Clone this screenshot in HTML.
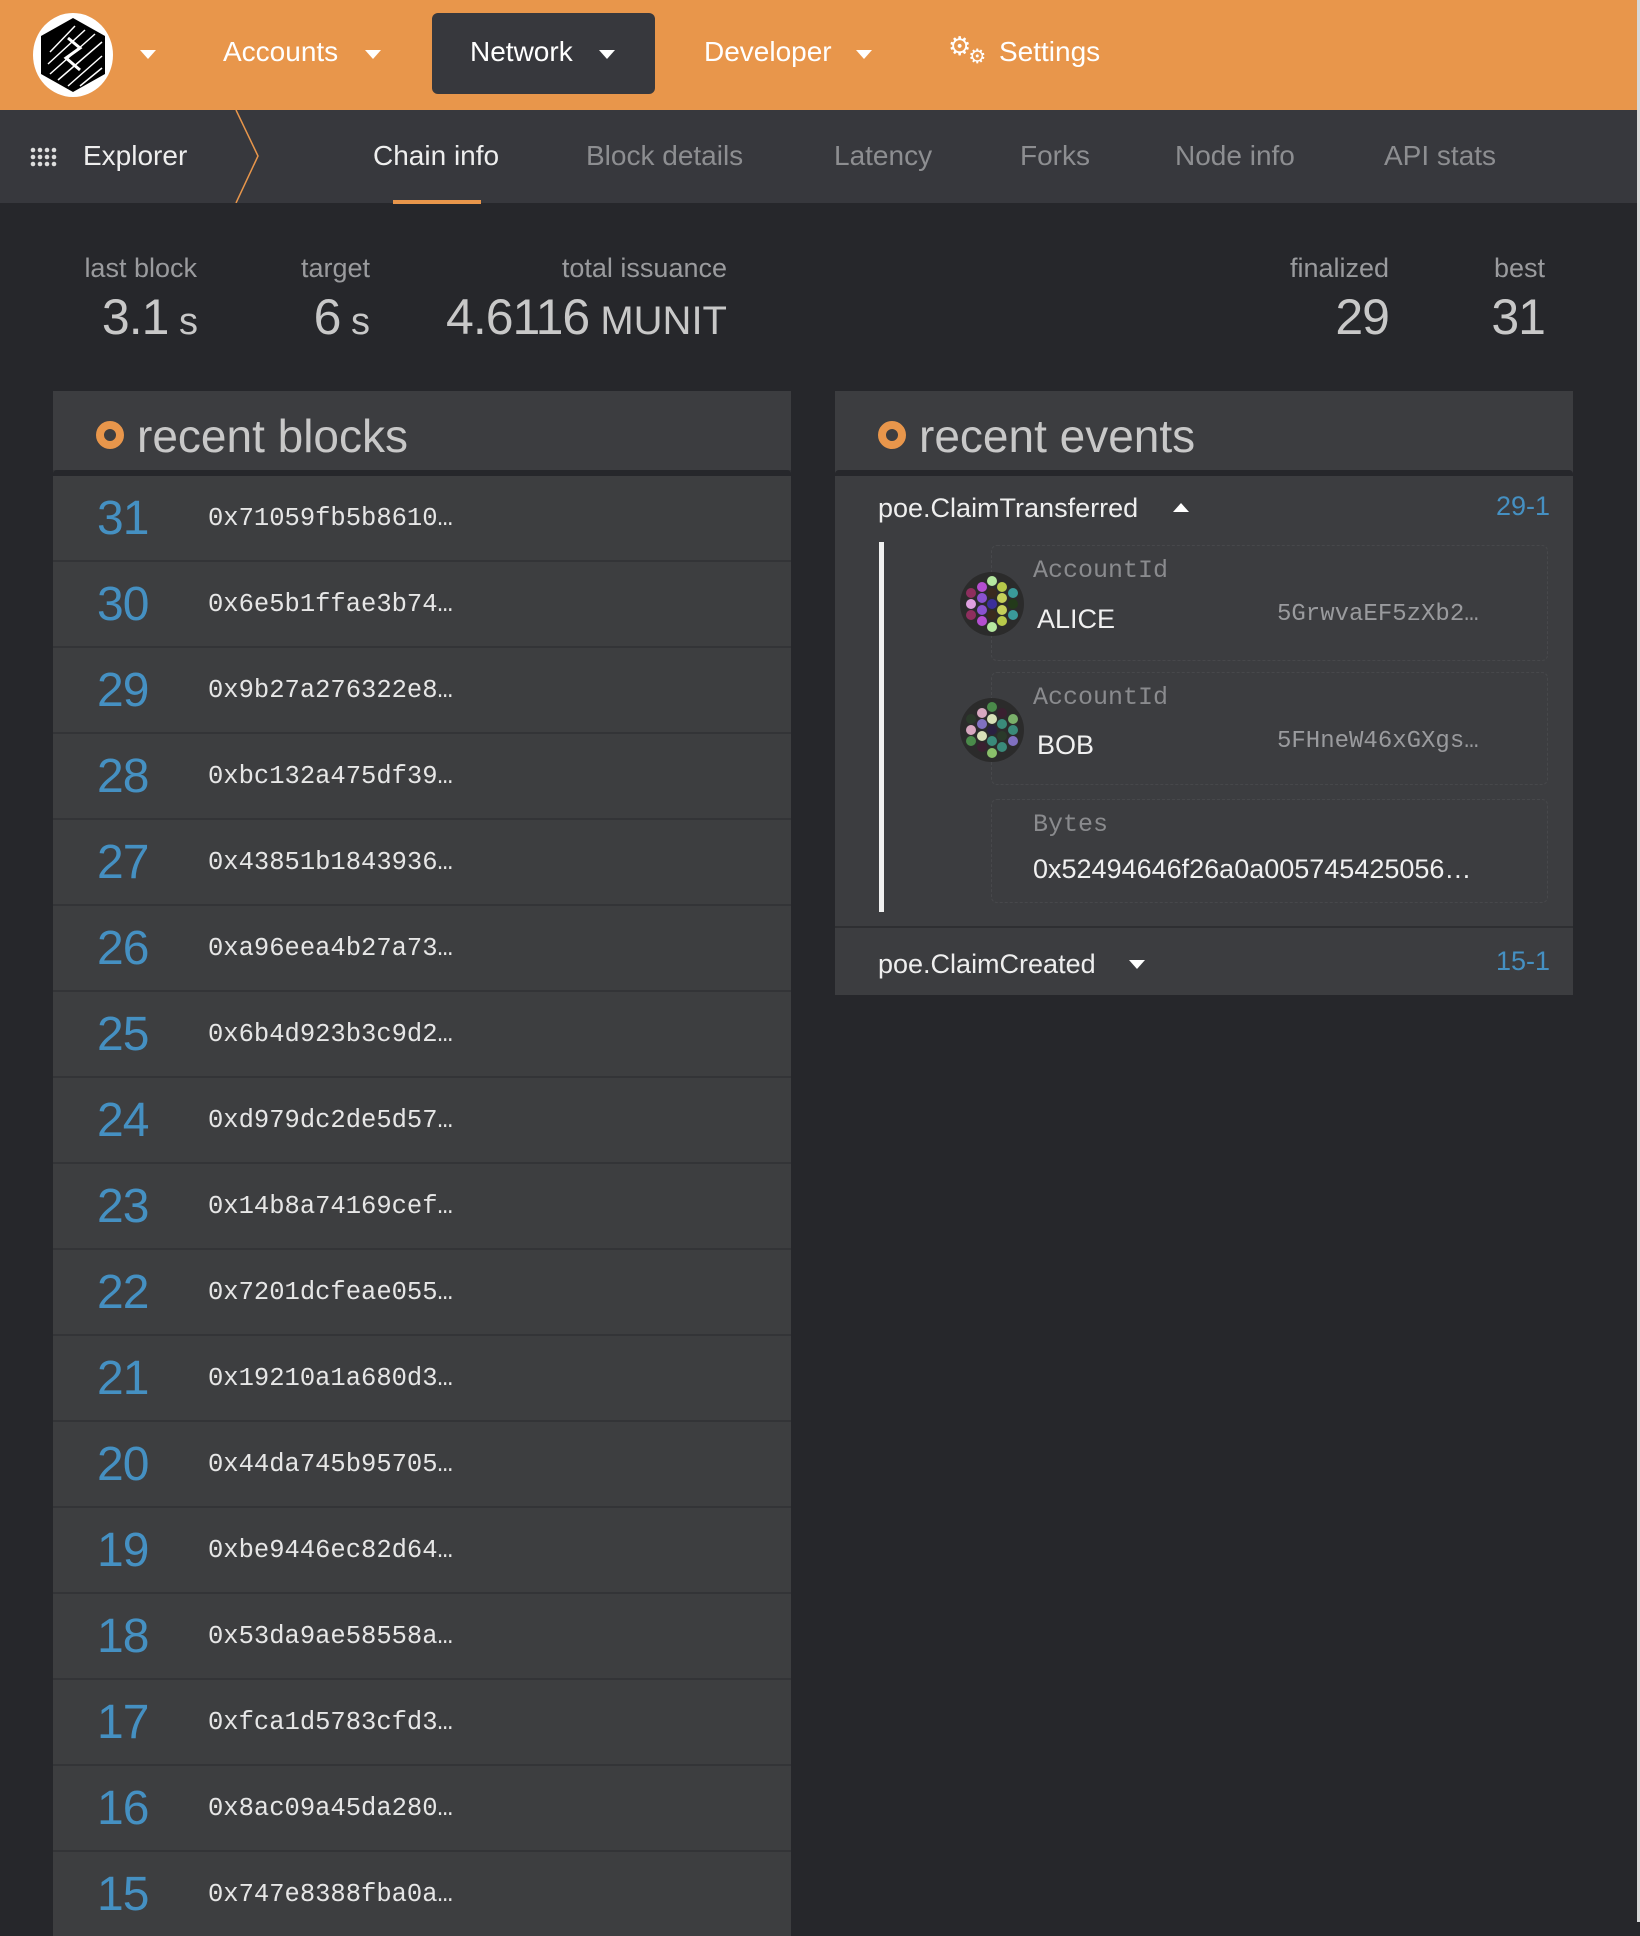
<!DOCTYPE html>
<html><head><meta charset="utf-8"><style>
*{margin:0;padding:0;box-sizing:border-box}
body{width:1640px;height:1922px;overflow:hidden;background:#26272b;font-family:"Liberation Sans",sans-serif;position:relative;color:#ddd}
.a{position:absolute;white-space:nowrap}
.top{left:0;top:0;width:1640px;height:110px;background:#e8964b}
.nav{font-size:28px;color:#fff;top:36px}
.car{width:0;height:0;border-left:8px solid transparent;border-right:8px solid transparent;border-top:9px solid #fff;position:absolute}
.sub{left:0;top:110px;width:1640px;height:93px;background:#37383d}
.tab{top:140px;font-size:28px;color:#8d8e91}
.lbl{top:253px;font-size:27px;color:#9a9b9e;text-align:right}
.val{top:288px;font-size:50px;color:#c8c8c8;text-align:right;letter-spacing:-1px}
.val small{font-size:38px;letter-spacing:0}
.panel{background:#333437}
.ptitle{font-size:46px;color:#c8c8c8;top:409px}
.ring{width:28px;height:28px;border-radius:50%;border:8px solid #e8964b;position:absolute;top:421px}
.row{position:absolute;left:53px;width:738px;height:84px;background:#3d3e40}
.num{position:absolute;left:44px;top:15px;font-size:48px;color:#4590c2;letter-spacing:-1px}
.hash{position:absolute;left:155px;top:28px;font-family:"Liberation Mono",monospace;font-size:25.5px;color:#e6e6e6}
.mono{font-family:"Liberation Mono",monospace}
.box{position:absolute;left:991px;width:557px;border:1px dashed #47484b;border-radius:6px}
</style></head><body>
<div class="a top"></div>
<svg class="a" style="left:30px;top:12px" width="86" height="86" viewBox="0 0 86 86">
<ellipse cx="43" cy="43" rx="40" ry="42" fill="#fff"/>
<polygon points="43,6 75,24 75,62 43,80 11,62 11,24" fill="#000"/>
<g stroke="#fff" stroke-width="1.5">
<line x1="20" y1="40" x2="45" y2="14"/><line x1="18" y1="52" x2="55" y2="18"/><line x1="20" y1="62" x2="65" y2="22"/><line x1="28" y1="68" x2="72" y2="30"/><line x1="38" y1="74" x2="72" y2="44"/><line x1="50" y1="74" x2="72" y2="56"/>
</g>
<path d="M38 26 L50 36 L36 46 L50 58" stroke="#fff" stroke-width="3" fill="none"/>
</svg>
<div class="car" style="left:140px;top:50px"></div>
<div class="a nav" style="left:223px">Accounts</div>
<div class="car" style="left:365px;top:50px"></div>
<div class="a" style="left:432px;top:13px;width:223px;height:81px;background:#37383d;border-radius:6px"></div>
<div class="a nav" style="left:470px">Network</div>
<div class="car" style="left:599px;top:50px"></div>
<div class="a nav" style="left:704px">Developer</div>
<div class="car" style="left:856px;top:50px"></div>
<div class="a" style="left:948px;top:34px;font-size:26px;line-height:26px;color:#fff;font-family:'DejaVu Sans',sans-serif">⚙<span style="font-size:20px;position:relative;top:8px;left:-3px">⚙</span></div>
<div class="a nav" style="left:999px">Settings</div>

<div class="a sub"></div>
<svg class="a" style="left:30px;top:147px" width="30" height="20"><g fill="#ddd">
<circle cx="3" cy="3" r="2.3"/><circle cx="10" cy="3" r="2.3"/><circle cx="17" cy="3" r="2.3"/><circle cx="24" cy="3" r="2.3"/>
<circle cx="3" cy="10" r="2.3"/><circle cx="10" cy="10" r="2.3"/><circle cx="17" cy="10" r="2.3"/><circle cx="24" cy="10" r="2.3"/>
<circle cx="3" cy="17" r="2.3"/><circle cx="10" cy="17" r="2.3"/><circle cx="17" cy="17" r="2.3"/><circle cx="24" cy="17" r="2.3"/></g></svg>
<div class="a tab" style="left:83px;color:#eee">Explorer</div>
<svg class="a" style="left:234px;top:110px" width="30" height="93"><path d="M2 0 L24 46 L2 93" stroke="#e8964b" stroke-width="1.5" fill="none"/></svg>
<div class="a tab" style="left:373px;color:#eee">Chain info</div>
<div class="a" style="left:393px;top:200px;width:88px;height:4px;background:#e8964b"></div>
<div class="a tab" style="left:586px">Block details</div>
<div class="a tab" style="left:834px">Latency</div>
<div class="a tab" style="left:1020px">Forks</div>
<div class="a tab" style="left:1175px">Node info</div>
<div class="a tab" style="left:1384px">API stats</div>

<div class="a lbl" style="right:1443px">last block</div>
<div class="a val" style="right:1442px">3.1<small> s</small></div>
<div class="a lbl" style="right:1270px">target</div>
<div class="a val" style="right:1270px">6<small> s</small></div>
<div class="a lbl" style="right:913px">total issuance</div>
<div class="a val" style="right:913px">4.6116<small style="font-size:40px"> MUNIT</small></div>
<div class="a lbl" style="right:251px">finalized</div>
<div class="a val" style="right:251px">29</div>
<div class="a lbl" style="right:95px">best</div>
<div class="a val" style="right:95px">31</div>

<div class="a panel" style="left:53px;top:391px;width:738px;height:1531px"></div>
<div class="a" style="left:53px;top:391px;width:738px;height:79px;background:#3c3d40"></div>
<div class="ring" style="left:96px"></div>
<div class="a ptitle" style="left:137px">recent blocks</div>
<div class="a" style="left:53px;top:470px;width:738px;height:6px;background:#26272b;border-radius:4px 4px 0 0"></div>
<div class="row" style="top:476px"><span class="num">31</span><span class="hash">0x71059fb5b8610…</span></div>
<div class="row" style="top:562px"><span class="num">30</span><span class="hash">0x6e5b1ffae3b74…</span></div>
<div class="row" style="top:648px"><span class="num">29</span><span class="hash">0x9b27a276322e8…</span></div>
<div class="row" style="top:734px"><span class="num">28</span><span class="hash">0xbc132a475df39…</span></div>
<div class="row" style="top:820px"><span class="num">27</span><span class="hash">0x43851b1843936…</span></div>
<div class="row" style="top:906px"><span class="num">26</span><span class="hash">0xa96eea4b27a73…</span></div>
<div class="row" style="top:992px"><span class="num">25</span><span class="hash">0x6b4d923b3c9d2…</span></div>
<div class="row" style="top:1078px"><span class="num">24</span><span class="hash">0xd979dc2de5d57…</span></div>
<div class="row" style="top:1164px"><span class="num">23</span><span class="hash">0x14b8a74169cef…</span></div>
<div class="row" style="top:1250px"><span class="num">22</span><span class="hash">0x7201dcfeae055…</span></div>
<div class="row" style="top:1336px"><span class="num">21</span><span class="hash">0x19210a1a680d3…</span></div>
<div class="row" style="top:1422px"><span class="num">20</span><span class="hash">0x44da745b95705…</span></div>
<div class="row" style="top:1508px"><span class="num">19</span><span class="hash">0xbe9446ec82d64…</span></div>
<div class="row" style="top:1594px"><span class="num">18</span><span class="hash">0x53da9ae58558a…</span></div>
<div class="row" style="top:1680px"><span class="num">17</span><span class="hash">0xfca1d5783cfd3…</span></div>
<div class="row" style="top:1766px"><span class="num">16</span><span class="hash">0x8ac09a45da280…</span></div>
<div class="row" style="top:1852px"><span class="num">15</span><span class="hash">0x747e8388fba0a…</span></div>

<div class="a" style="left:835px;top:391px;width:738px;height:604px;background:#3c3d40"></div>
<div class="ring" style="left:878px"></div>
<div class="a ptitle" style="left:919px">recent events</div>
<div class="a" style="left:835px;top:470px;width:738px;height:6px;background:#26272b;border-radius:4px 4px 0 0"></div>
<div class="a" style="left:878px;top:493px;font-size:27px;color:#eee">poe.ClaimTransferred</div>
<div class="car" style="left:1173px;top:503px;border-top:none;border-bottom:9px solid #fff"></div>
<div class="a" style="right:90px;top:491px;font-size:27px;color:#4590c2">29-1</div>
<div class="a" style="left:879px;top:542px;width:5px;height:370px;background:#f0f0f0"></div>
<div class="box" style="top:545px;height:116px"></div>
<div class="box" style="top:672px;height:113px"></div>
<div class="box" style="top:799px;height:104px"></div>

<svg class="a" style="left:959px;top:571px" width="66" height="66" viewBox="-33 -33 66 66">
<circle r="32" fill="#2b2b2b"/>
<circle cx="0" cy="-23" r="5" fill="#b5e8a0"/><circle cx="0" cy="-11" r="5" fill="#3a2a1e"/><circle cx="0" cy="0" r="5" fill="#3b2f9a"/><circle cx="0" cy="11" r="5" fill="#3a2a1e"/><circle cx="0" cy="23" r="5" fill="#b5e8a0"/>
<circle cx="-10" cy="-17" r="5" fill="#b44fd0"/><circle cx="-10" cy="-6" r="5" fill="#8a52d0"/><circle cx="-10" cy="6" r="5" fill="#8a52d0"/><circle cx="-10" cy="17" r="5" fill="#b44fd0"/>
<circle cx="10" cy="-17" r="5" fill="#b7c94a"/><circle cx="10" cy="-6" r="5" fill="#c5d05a"/><circle cx="10" cy="6" r="5" fill="#c5d05a"/><circle cx="10" cy="17" r="5" fill="#b7c94a"/>
<circle cx="-21" cy="-11" r="5" fill="#8e2e5e"/><circle cx="-21" cy="0" r="5" fill="#e0a0e0"/><circle cx="-21" cy="11" r="5" fill="#8e2e5e"/>
<circle cx="21" cy="-11" r="5" fill="#3a9a9a"/><circle cx="21" cy="0" r="5" fill="#233a1a"/><circle cx="21" cy="11" r="5" fill="#3a9a9a"/>
</svg>
<svg class="a" style="left:959px;top:697px" width="66" height="66" viewBox="-33 -33 66 66">
<circle r="32" fill="#2b2b2b"/>
<circle cx="0" cy="-23" r="5" fill="#4a8a4a"/><circle cx="0" cy="-11" r="5" fill="#d8e0b8"/><circle cx="0" cy="0" r="5" fill="#2a2040"/><circle cx="0" cy="11" r="5" fill="#3a8a7a"/><circle cx="0" cy="23" r="5" fill="#8ac06a"/>
<circle cx="-10" cy="-17" r="5" fill="#d8a8c0"/><circle cx="-10" cy="-6" r="5" fill="#8070c0"/><circle cx="-10" cy="6" r="5" fill="#d8e0b8"/><circle cx="-10" cy="17" r="5" fill="#3a2030"/>
<circle cx="10" cy="-17" r="5" fill="#3a2030"/><circle cx="10" cy="-6" r="5" fill="#3a8a7a"/><circle cx="10" cy="6" r="5" fill="#2a3a2a"/><circle cx="10" cy="17" r="5" fill="#3a8a7a"/>
<circle cx="-21" cy="-11" r="5" fill="#2a3a2a"/><circle cx="-21" cy="0" r="5" fill="#d8a8c0"/><circle cx="-21" cy="11" r="5" fill="#4a8a4a"/>
<circle cx="21" cy="-11" r="5" fill="#7ab06a"/><circle cx="21" cy="0" r="5" fill="#3a8a7a"/><circle cx="21" cy="11" r="5" fill="#8070c0"/>
</svg>

<div class="a mono" style="left:1033px;top:556px;font-size:25px;color:#8a8b8e">AccountId</div>
<div class="a" style="left:1037px;top:604px;font-size:27px;color:#f0f0f0">ALICE</div>
<div class="a mono" style="left:1277px;top:601px;font-size:24px;color:#9a9b9e">5GrwvaEF5zXb2…</div>
<div class="a mono" style="left:1033px;top:683px;font-size:25px;color:#8a8b8e">AccountId</div>
<div class="a" style="left:1037px;top:730px;font-size:27px;color:#f0f0f0">BOB</div>
<div class="a mono" style="left:1277px;top:728px;font-size:24px;color:#9a9b9e">5FHneW46xGXgs…</div>
<div class="a mono" style="left:1033px;top:810px;font-size:25px;color:#8a8b8e">Bytes</div>
<div class="a" style="left:1033px;top:854px;font-size:27px;color:#f0f0f0">0x52494646f26a0a005745425056…</div>

<div class="a" style="left:835px;top:926px;width:738px;height:2px;background:#2e2f32"></div>
<div class="a" style="left:878px;top:949px;font-size:27px;color:#eee">poe.ClaimCreated</div>
<div class="car" style="left:1129px;top:960px"></div>
<div class="a" style="right:90px;top:946px;font-size:27px;color:#4590c2">15-1</div>

<div class="a" style="left:1637px;top:0;width:3px;height:1922px;background:#d8d8d8"></div>
</body></html>
